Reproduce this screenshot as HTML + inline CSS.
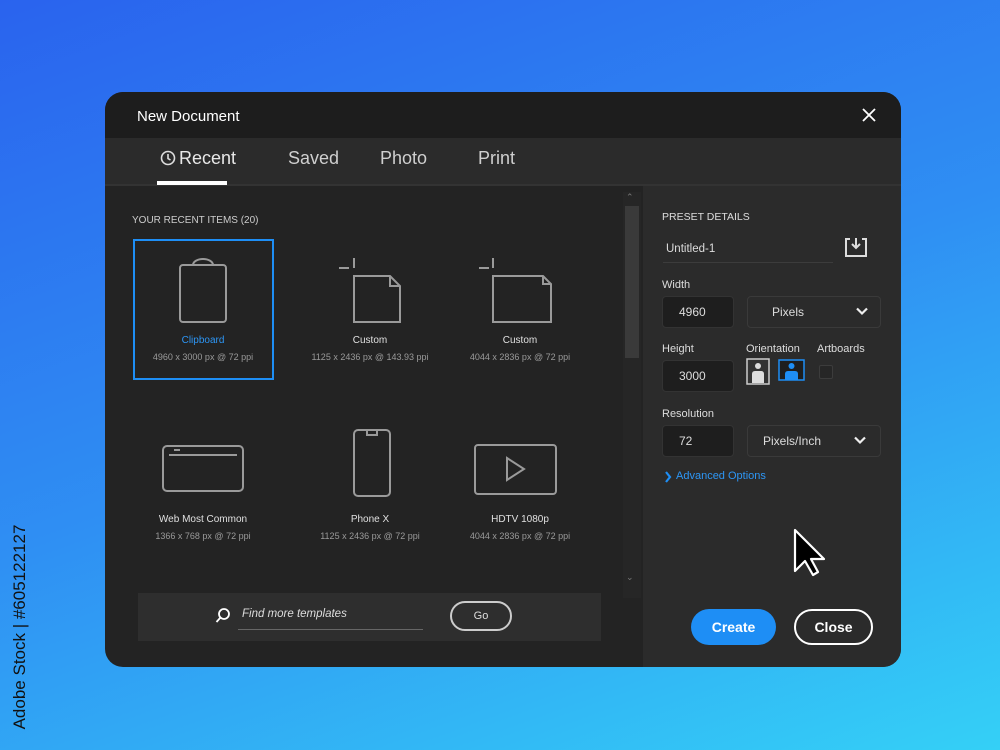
<!DOCTYPE html>
<html><head><style>
*{margin:0;padding:0;box-sizing:border-box}
body{width:1000px;height:750px;overflow:hidden;background:linear-gradient(160deg,#2a63ee 0%,#2f8ff3 50%,#34d0f6 100%);font-family:"Liberation Sans",sans-serif;position:relative}
.dlg{position:absolute;left:105px;top:92px;width:796px;height:575px;border-radius:18px;overflow:hidden;background:#232323}
.title{position:absolute;left:0;top:0;width:100%;height:46px;background:#1d1d1d;color:#fff;font-size:15px;padding:16px 32px}
.tabs{position:absolute;left:0;top:46px;width:100%;height:48px;background:#2b2b2b;border-bottom:2px solid #333}
.tab{position:absolute;top:10px;color:#cfcfcf;font-size:18px}
.right{position:absolute;left:538px;top:94px;width:258px;height:481px;background:#2b2b2b}
.rin{position:absolute;left:0;top:6px;width:258px;height:475px}
.a{position:absolute}
.lbl{color:#ddd;font-size:11px}
.item{position:absolute;text-align:center;width:150px}
.item .n{color:#e0e0e0;font-size:10px}
.item .d{color:#9a9a9a;font-size:9px;margin-top:6px}
.inp{position:absolute;background:#1e1e1e;border:1px solid #333;border-radius:4px;color:#ddd;font-size:12px;padding-left:16px;display:flex;align-items:center}
.sel{position:absolute;border:1px solid #3a3a3a;border-radius:4px;color:#ddd;font-size:12px;padding-left:24px;display:flex;align-items:center;background:#2b2b2b}
.wm{position:absolute;left:-100px;top:617px;transform:rotate(-90deg);color:#111;font-size:17px;width:240px;transform-origin:center;text-align:center}
</style></head><body>
<div class="wm">Adobe Stock | #605122127</div>
<div class="dlg">
 <div class="title">New Document</div>
 <svg class="a" style="left:756px;top:15px" width="16" height="16"><path d="M2 2L14 14M14 2L2 14" stroke="#fff" stroke-width="1.8"/></svg>
 <div class="tabs">
  <svg class="a" style="left:55px;top:12px" width="16" height="16"><circle cx="8" cy="8" r="6.5" fill="none" stroke="#ddd" stroke-width="1.6"/><path d="M8 4V8.5L10.5 10" stroke="#ddd" stroke-width="1.6" fill="none"/></svg>
  <div class="tab" style="left:74px;color:#e8e8e8">Recent</div>
  <div class="a" style="left:52px;top:43px;width:70px;height:4px;background:#fff"></div>
  <div class="tab" style="left:183px">Saved</div>
  <div class="tab" style="left:275px">Photo</div>
  <div class="tab" style="left:373px">Print</div>
 </div>
 <div class="a lbl" style="left:27px;top:123px;font-size:10px;color:#ccc">YOUR RECENT ITEMS (20)</div>
 <div class="a" style="left:28px;top:147px;width:141px;height:141px;border:2px solid #1e8ef5"></div>
 <svg class="a" style="left:0;top:0" width="540" height="480" fill="none" stroke="#9a9a9a" stroke-width="2">
  <rect x="75" y="173" width="46" height="57" rx="3"/><path d="M88 173a10 6 0 0 1 20 0"/>
  <path d="M249 184H285L295 194V230H249Z M285 184V194H295"/><path d="M249 166V176M234 176H244"/>
  <path d="M388 184H438L446 192V230H388Z M438 184V192H446"/><path d="M388 166V176M374 176H384"/>
  <rect x="58" y="354" width="80" height="45" rx="4"/><path d="M64 363H132"/><path d="M69 358H75"/>
  <rect x="249" y="338" width="36" height="66" rx="4"/><path d="M262 339V343H272V339"/>
  <rect x="370" y="353" width="81" height="49" rx="3"/><path d="M402 366L419 377L402 388Z"/>
 </svg>
 <div class="item" style="left:23px;top:243px"><div class="n" style="color:#2d96f5">Clipboard</div><div class="d">4960 x 3000 px @ 72 ppi</div></div>
 <div class="item" style="left:190px;top:243px"><div class="n">Custom</div><div class="d">1125 x 2436 px @ 143.93 ppi</div></div>
 <div class="item" style="left:340px;top:243px"><div class="n">Custom</div><div class="d">4044 x 2836 px @ 72 ppi</div></div>
 <div class="item" style="left:23px;top:422px"><div class="n">Web Most Common</div><div class="d">1366 x 768 px @ 72 ppi</div></div>
 <div class="item" style="left:190px;top:422px"><div class="n">Phone X</div><div class="d">1125 x 2436 px @ 72 ppi</div></div>
 <div class="item" style="left:340px;top:422px"><div class="n">HDTV 1080p</div><div class="d">4044 x 2836 px @ 72 ppi</div></div>
 <div class="a" style="left:518px;top:100px;width:18px;height:406px;background:#262626"></div>
 <div class="a" style="left:520px;top:114px;width:14px;height:152px;background:#3a3a3a"></div>
 <div class="a" style="left:521px;top:100px;color:#777;font-size:9px">⌃</div>
 <div class="a" style="left:521px;top:480px;color:#777;font-size:9px">⌄</div>
 <div class="a" style="left:33px;top:501px;width:463px;height:48px;background:#2e2e2e">
  <svg class="a" style="left:77px;top:14px" width="16" height="18" fill="none" stroke="#fff" stroke-width="1.8"><circle cx="9" cy="7" r="5"/><path d="M5.5 10.5L1.5 15"/></svg>
  <div class="a" style="left:104px;top:15px;color:#ddd;font-size:11.5px;font-style:italic">Find more templates</div>
  <div class="a" style="left:100px;top:36px;width:185px;height:1px;background:#666"></div>
  <div class="a" style="left:312px;top:8px;width:62px;height:30px;border:2px solid #ccc;border-radius:15px;color:#ddd;font-size:11px;text-align:center;line-height:26px">Go</div>
 </div>
 <div class="right"><div class="rin">
  <div class="a" style="left:19px;top:19px;color:#ddd;font-size:10.5px">PRESET DETAILS</div>
  <div class="a" style="left:23px;top:51px;color:#ddd;font-size:11.5px">Untitled-1</div>
  <div class="a" style="left:20px;top:70px;width:170px;height:1px;background:#3c3c3c"></div>
  <svg class="a" style="left:201px;top:44px" width="24" height="22" fill="none" stroke="#ddd" stroke-width="2"><path d="M6 3H2V20H22V3H18"/><path d="M12 2V12M8 8L12 12L16 8"/></svg>
  <div class="a lbl" style="left:19px;top:87px">Width</div>
  <div class="inp" style="left:19px;top:104px;width:72px;height:32px">4960</div>
  <div class="sel" style="left:104px;top:104px;width:134px;height:32px">Pixels</div>
  <svg class="a" style="left:213px;top:115px" width="12" height="9"><path d="M1 1.5L6 6.5L11 1.5" stroke="#eee" stroke-width="2.2" fill="none"/></svg>
  <div class="a lbl" style="left:19px;top:151px">Height</div>
  <div class="a lbl" style="left:103px;top:151px">Orientation</div>
  <div class="a lbl" style="left:174px;top:151px">Artboards</div>
  <div class="inp" style="left:19px;top:168px;width:72px;height:32px">3000</div>
  <svg class="a" style="left:103px;top:166px" width="62" height="28"><rect x="1" y="1" width="22" height="25" fill="#333" stroke="#ccc" stroke-width="1.5"/><circle cx="12" cy="8" r="3" fill="#ddd"/><path d="M6 25V16q0-3 3-3h6q3 0 3 3v9Z" fill="#ddd"/><rect x="33" y="2" width="25" height="20" fill="#1e1e1e" stroke="#1e8ef5" stroke-width="1.5"/><circle cx="45.5" cy="8" r="3" fill="#1e8ef5"/><path d="M39 22V16q0-3 3-3h7q3 0 3 3v6Z" fill="#1e8ef5"/></svg>
  <div class="a" style="left:176px;top:173px;width:14px;height:14px;border:1px solid #3c3c3c;border-radius:2px;background:#262626"></div>
  <div class="a lbl" style="left:19px;top:216px">Resolution</div>
  <div class="inp" style="left:19px;top:233px;width:72px;height:32px">72</div>
  <div class="sel" style="left:104px;top:233px;width:134px;height:32px;padding-left:15px">Pixels/Inch</div>
  <svg class="a" style="left:211px;top:244px" width="12" height="9"><path d="M1 1.5L6 6.5L11 1.5" stroke="#eee" stroke-width="2.2" fill="none"/></svg>
  <svg class="a" style="left:21px;top:279px" width="8" height="12"><path d="M2 1L6 6L2 11" stroke="#1e8ef5" stroke-width="2.2" fill="none"/></svg>
  <div class="a" style="left:33px;top:278px;color:#2d96f5;font-size:11px">Advanced Options</div>
  <svg class="a" style="left:148px;top:335px" width="40" height="50"><path d="M4 3V44L14 34L22 48L27 45L20 32H33Z" fill="#000" stroke="#fff" stroke-width="2.2" stroke-linejoin="round"/></svg>
  <div class="a" style="left:48px;top:417px;width:85px;height:36px;border-radius:18px;background:#1e8ef5;color:#fff;font-size:14px;font-weight:bold;text-align:center;line-height:36px">Create</div>
  <div class="a" style="left:151px;top:417px;width:79px;height:36px;border-radius:18px;border:2px solid #fff;color:#fff;font-size:14px;font-weight:bold;text-align:center;line-height:32px">Close</div>
 </div></div>
</div>
</body></html>
